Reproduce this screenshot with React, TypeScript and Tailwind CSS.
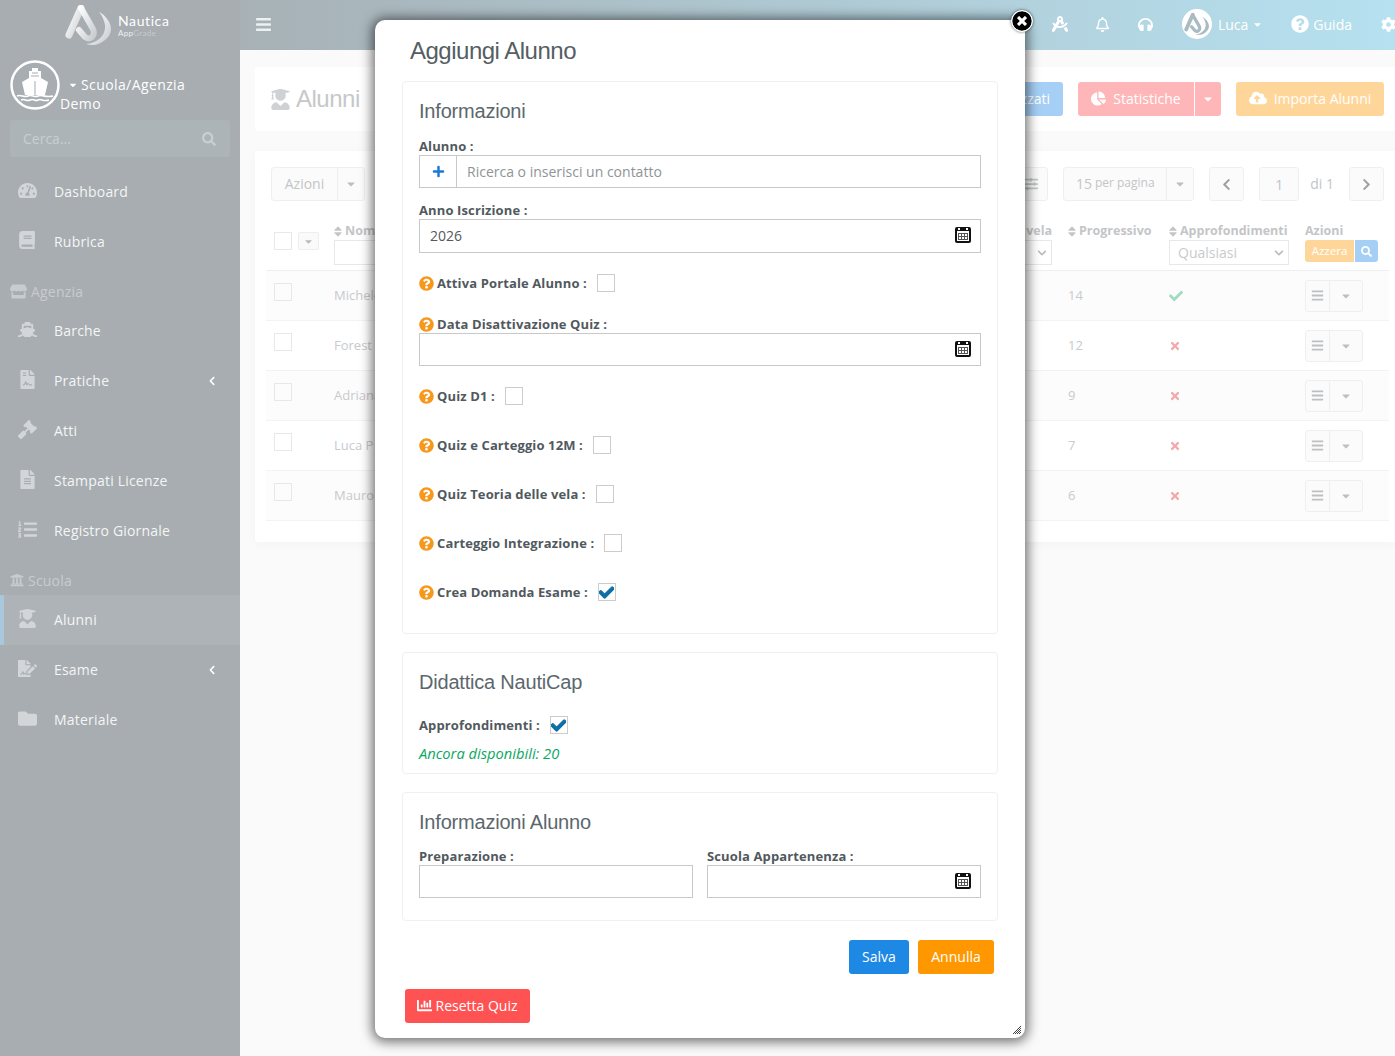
import type { ReactNode } from "react";
import {
  FaBars,
  FaBook,
  FaCaretDown,
  FaChartBar,
  FaChartPie,
  FaCheck,
  FaChevronDown,
  FaChevronLeft,
  FaChevronRight,
  FaCloudUploadAlt,
  FaCog,
  FaDraftingCompass,
  FaFileAlt,
  FaFileContract,
  FaFileSignature,
  FaFolder,
  FaGavel,
  FaHeadphones,
  FaListOl,
  FaPlus,
  FaQuestionCircle,
  FaRegBell,
  FaSearch,
  FaShip,
  FaSlidersH,
  FaSort,
  FaStore,
  FaTachometerAlt,
  FaTimes,
  FaTimesCircle,
  FaUniversity,
  FaUserGraduate,
} from "react-icons/fa";

const rows = [
  { name: "Michele", num: 14, ok: true },
  { name: "Forest", num: 12, ok: false },
  { name: "Adriana", num: 9, ok: false },
  { name: "Luca P", num: 7, ok: false },
  { name: "Mauro", num: 6, ok: false },
];

function Logo({ color = "url(#logoFill)", className }: { color?: string; className?: string }) {
  return (
    <svg viewBox="0 0 48 40" className={className}>
      <defs>
        <linearGradient id="logoFill" x1="0" y1="0" x2="1" y2="1">
          <stop offset="0" stopColor="#ffffff" />
          <stop offset="1" stopColor="#c9cdd0" />
        </linearGradient>
      </defs>
      <path d="M16 3 L4 30" stroke={color} strokeWidth="7" strokeLinecap="round" fill="none" />
      <path d="M16 3 L28 24 C31 31 25 36 20 32 L14 25" stroke={color} strokeWidth="6" strokeLinecap="round" strokeLinejoin="round" fill="none" />
      <path d="M34 7 C44 12 52 26 40 35 C34 40 28 41 21 39 C33 38 41 30 40 20 C39 15 37 10 34 7Z" fill={color} />
    </svg>
  );
}

function ShipAvatar() {
  return (
    <svg viewBox="0 0 50 50" className="h-[50px] w-[50px] shrink-0">
      <circle cx="25" cy="25" r="23.5" fill="none" stroke="#fff" strokeWidth="2.5" />
      <path d="M22 8h6v3h3v7l7 4-3 13H15l-3-13 7-4v-7h3z" fill="#fff" />
      <path d="M22 13h6M21 16h8" stroke="#a7adb1" strokeWidth="1" />
      <path d="M25 21v14" stroke="#a7adb1" strokeWidth="1" />
      <path d="M7 36c4-2 7 2 11 0s6 2 10 0 7 2 15 0M11 40c4-2 5 2 9 0s5 2 8 0 5 2 11 0" stroke="#fff" strokeWidth="1.6" fill="none" />
    </svg>
  );
}

function CalendarIcon() {
  return (
    <svg viewBox="0 0 16 16" className="absolute right-[10px] top-[8px] h-[16px] w-[16px]">
      <rect width="16" height="16" rx="2" fill="#111" />
      <path d="M3 1h2v2H3zM11 1h2v2h-2z" fill="#fff" />
      <rect x="2" y="4" width="12" height="10" fill="#fff" />
      <rect x="3" y="6" width="10" height="7" fill="#555" />
      <path d="M4 7h2v2H4zM7 7h2v2H7zM10 7h2v2h-2zM4 10h2v2H4zM7 10h2v2H7zM10 10h2v2h-2z" fill="#fff" />
    </svg>
  );
}

function MenuItem({ icon, label, arrow, active }: { icon: ReactNode; label: string; arrow?: boolean; active?: boolean }) {
  return (
    <div className={`flex h-[50px] items-center pb-[2px] pr-[23px] ${active ? "border-l-4 border-[#a9c8dc] bg-[#aeb3b7] pl-[14px]" : "pl-[18px]"}`}>
      <span className="flex w-[36px] -translate-y-px text-[19px] text-[#d3d6d8]">{icon}</span>
      <span className="flex-1 text-[14px] tracking-[0.2px] text-[#f4f5f5]">{label}</span>
      {arrow && <FaChevronLeft className="mt-[2px] text-[10px] text-white" />}
    </div>
  );
}

function SectionLabel({ icon, label }: { icon: ReactNode; label: string }) {
  return (
    <div className="flex h-[28px] items-center gap-[4px] pb-[2px] pl-[10px] text-[14px] tracking-[0.2px] text-[#c8cccf]">
      {icon}
      {label}
    </div>
  );
}

function Sidebar() {
  return (
    <aside className="flex h-full w-[240px] shrink-0 flex-col bg-[#a7adb1]">
      <div className="flex h-[50px] items-center pl-[65px]">
        <Logo className="h-[40px] w-[48px]" />
        <div className="ml-[5px] flex flex-col leading-none">
          <span className="font-['Lato',sans-serif] text-[14px] tracking-[0.6px] text-white">Nautica</span>
          <span className="mt-[1px] font-['Lato',sans-serif] text-[8px] tracking-[0.3px] text-[#f0f1f2]">
            App<span className="text-[#c6cacd]">Grade</span>
          </span>
        </div>
      </div>
      <div className="relative h-[70px] pl-[10px] pt-[10px]">
        <ShipAvatar />
        <div className="absolute left-[68px] top-[25px] flex items-center gap-[3px] text-[14px] font-medium leading-[20px] tracking-[0.4px] text-white">
          <FaCaretDown className="text-[10px]" />
          Scuola/Agenzia
        </div>
        <div className="absolute left-[60px] top-[44px] text-[14px] font-medium leading-[20px] tracking-[0.4px] text-white">Demo</div>
      </div>
      <div className="mx-[10px] flex h-[37px] items-center justify-between rounded-[3px] bg-[#adb4b8] pl-[13px] pr-[14px] text-[14px] text-[#c9ced1]">
        Cerca...
        <FaSearch className="text-[14px] text-[#c9ced1]" />
      </div>
      <div className="mt-[10px]">
        <MenuItem icon={<FaTachometerAlt />} label="Dashboard" />
        <MenuItem icon={<FaBook className="text-[18px]" />} label="Rubrica" />
      </div>
      <div className="mt-[11px]">
        <SectionLabel icon={<FaStore className="text-[17px]" />} label="Agenzia" />
      </div>
      <div>
        <MenuItem icon={<FaShip />} label="Barche" />
        <MenuItem icon={<FaFileContract />} label="Pratiche" arrow />
        <MenuItem icon={<FaGavel />} label="Atti" />
        <MenuItem icon={<FaFileAlt />} label="Stampati Licenze" />
        <MenuItem icon={<FaListOl />} label="Registro Giornale" />
      </div>
      <div className="mt-[11px]">
        <SectionLabel icon={<FaUniversity className="text-[14px]" />} label="Scuola" />
      </div>
      <div>
        <MenuItem icon={<FaUserGraduate />} label="Alunni" active />
        <MenuItem icon={<FaFileSignature />} label="Esame" arrow />
        <MenuItem icon={<FaFolder />} label="Materiale" />
      </div>
    </aside>
  );
}

function TopBar() {
  return (
    <header className="flex h-[50px] shrink-0 items-center bg-gradient-to-r from-[#a7b1b6] to-[#b6e1f0] pb-[2px] pl-[15px] text-white">
      <FaBars className="text-[17px] text-[#eef0f1]" />
      <div className="ml-auto flex items-center">
        <FaDraftingCompass className="mr-[27px] text-[16px]" />
        <FaRegBell className="mr-[28px] text-[15px]" />
        <FaHeadphones className="mr-[29px] text-[15px]" />
        <span className="flex h-[30px] w-[30px] items-center justify-center rounded-full bg-white">
          <Logo color="#a9bac3" className="h-[24px] w-[26px]" />
        </span>
        <span className="ml-[6px] text-[14px]">Luca</span>
        <FaCaretDown className="ml-[4px] mr-[28px] text-[11px]" />
        <FaQuestionCircle className="text-[18px]" />
        <span className="ml-[4px] mr-[29px] text-[14px]">Guida</span>
        <FaCog className="mr-[-1px] text-[15px]" />
      </div>
    </header>
  );
}

function SplitBtn({ label, w }: { label: ReactNode; w: string }) {
  return (
    <div className="flex h-[34px] rounded-[3px] border border-[#efefef] bg-[#fbfbfb] text-[#c3c5c7]">
      <span className={`flex items-center justify-center border-r border-[#efefef] pb-[2px] text-[14px] ${w}`}>{label}</span>
      <span className="flex w-[26px] items-center justify-center text-[#bdbfc1]">
        <FaCaretDown className="text-[12px]" />
      </span>
    </div>
  );
}

function SquareBtn({ children, w = "w-[35px]" }: { children: ReactNode; w?: string }) {
  return (
    <span className={`flex h-[34px] items-center justify-center rounded-[3px] border border-[#efefef] bg-[#fbfbfb] text-[14px] text-[#c3c5c7] ${w}`}>
      {children}
    </span>
  );
}

function HeadLabel({ children, sort = true }: { children: ReactNode; sort?: boolean }) {
  return (
    <div className="flex h-[16px] items-center gap-[3px] whitespace-nowrap text-[12.5px] font-bold text-[#c3c5c7]">
      {sort && <FaSort className="w-[8px] text-[13px]" />}
      {children}
    </div>
  );
}

function FakeSelect({ label, w }: { label?: string; w: string }) {
  return (
    <div className={`mt-[1px] flex h-[25px] items-center border border-[#e8e8e8] bg-white pl-[8px] pr-[4px] text-[14px] text-[#c9cbcd] ${w}`}>
      {label}
      <FaChevronDown className="ml-auto text-[10px] text-[#b9bbbd]" />
    </div>
  );
}

function Background() {
  return (
    <main className="flex min-w-0 flex-1 flex-col bg-[#fafafa]">
      <TopBar />
      <div className="flex-1 pl-[15px] pt-[17px]">
        <section className="flex h-[64px] items-center rounded-l-[3px] bg-white pl-[15px] pr-[11px]">
          <FaUserGraduate className="text-[21px] text-[#cfd2d4]" />
          <h1 className="ml-[5px] font-['Liberation_Sans',sans-serif] text-[24px] tracking-[-0.5px] text-[#c5c8ca]">Alunni</h1>
          <div className="ml-auto flex items-center gap-[15px] text-[14px] text-white">
            <span className="flex h-[34px] items-center rounded-[3px] bg-[#a5cff5] px-[13px] pb-[2px]">Utilizzati</span>
            <div className="flex h-[34px] rounded-[3px] bg-[#ffb6b8]">
              <span className="flex w-[117px] items-center justify-center gap-[7px] border-r border-white pb-[2px]">
                <FaChartPie className="text-[15px]" />
                Statistiche
              </span>
              <span className="flex w-[26px] items-center justify-center">
                <FaCaretDown className="text-[12px]" />
              </span>
            </div>
            <span className="flex h-[34px] w-[148px] items-center justify-center gap-[7px] rounded-[3px] bg-[#ffd699] pb-[2px]">
              <FaCloudUploadAlt className="text-[18px]" />
              Importa Alunni
            </span>
          </div>
        </section>
        <section className="mt-[20px] h-[391px] rounded-l-[3px] bg-white pl-[11px] pr-[6px] pt-[16px] shadow-[0_2px_12px_rgba(0,0,0,0.03)]">
          <div className="flex items-center pl-[5px] pr-[5px]">
            <SplitBtn label="Azioni" w="w-[66px]" />
            <div className="ml-auto flex items-center">
              <SquareBtn>
                <FaSlidersH />
              </SquareBtn>
              <div className="ml-[15px]">
                <SplitBtn
                  label={
                    <>
                      15 <span className="ml-[3px] text-[12px]">per pagina</span>
                    </>
                  }
                  w="w-[103px]"
                />
              </div>
              <div className="ml-[15px]">
                <SquareBtn>
                  <FaChevronLeft className="text-[13px] text-[#9ea0a2]" />
                </SquareBtn>
              </div>
              <div className="ml-[15px]">
                <SquareBtn w="w-[40px]">1</SquareBtn>
              </div>
              <span className="ml-[11px] mr-[15px] pb-[1px] text-[14px] text-[#c3c5c7]">di 1</span>
              <SquareBtn>
                <FaChevronRight className="text-[13px] text-[#9ea0a2]" />
              </SquareBtn>
            </div>
          </div>
          <div className="mt-[22px] grid h-[48px] grid-cols-[68px_1fr_68px_101px_136px_84px] border-b border-[#efefef]">
            <div className="flex gap-[6px] pl-[8px] pt-[9px]">
              <span className="h-[18px] w-[18px] border border-[#e8e8e8]" />
              <span className="flex h-[18px] w-[21px] items-center justify-center rounded-[2px] border border-[#eeeeee] bg-[#fafafa]">
                <FaCaretDown className="text-[11px] text-[#b9bbbd]" />
              </span>
            </div>
            <div>
              <HeadLabel>Nome</HeadLabel>
              <div className="mt-[1px] h-[25px] w-[120px] border border-[#e8e8e8]" />
            </div>
            <div className="flex flex-col items-end pr-[16px]">
              <HeadLabel sort={false}>Esame vela</HeadLabel>
              <FakeSelect w="w-[60px]" />
            </div>
            <HeadLabel>Progressivo</HeadLabel>
            <div>
              <HeadLabel>Approfondimenti</HeadLabel>
              <FakeSelect label="Qualsiasi" w="w-[120px]" />
            </div>
            <div>
              <HeadLabel sort={false}>Azioni</HeadLabel>
              <div className="mt-[1px] flex h-[22px] text-[11.5px] text-white">
                <span className="flex w-[49px] items-center justify-center rounded-l-[3px] bg-[#ffd699]">Azzera</span>
                <span className="ml-px flex w-[23px] items-center justify-center rounded-r-[3px] bg-[#a5cff5]">
                  <FaSearch className="text-[11px]" />
                </span>
              </div>
            </div>
          </div>
          {rows.map((row, i) => (
            <div
              key={row.name}
              className={`grid h-[50px] grid-cols-[68px_1fr_68px_101px_136px_84px] items-center border-b border-[#f3f3f3] text-[13px] text-[#c8cacc] ${i % 2 === 0 ? "bg-[#fcfcfc]" : "bg-white"}`}
            >
              <span className="ml-[8px] -mt-[8px] h-[18px] w-[18px] border border-[#e8e8e8]" />
              <span className="mt-[1px]">{row.name}</span>
              <span />
              <span className="mt-[1px]">{row.num}</span>
              <span className="mt-[1px]">
                {row.ok ? <FaCheck className="text-[14px] text-[#a2dcc0]" /> : <FaTimes className="text-[12px] text-[#f3a9a9]" />}
              </span>
              <div className="flex h-[32px] w-[58px] rounded-[3px] border border-[#efefef] bg-[#fbfbfb]">
                <span className="flex w-[24px] items-center justify-center border-r border-[#efefef] text-[#bdbfc1]">
                  <FaBars className="text-[13px]" />
                </span>
                <span className="flex flex-1 items-center justify-center text-[#bdbfc1]">
                  <FaCaretDown className="text-[12px]" />
                </span>
              </div>
            </div>
          ))}
        </section>
      </div>
    </main>
  );
}

function Check({ checked }: { checked?: boolean }) {
  return (
    <span className="flex h-[18px] w-[18px] items-center justify-center border border-[#cccccc] bg-white">
      {checked && <FaCheck className="stroke-[40] text-[15px] text-[#0d6fa5]" />}
    </span>
  );
}

function Label({ children, help }: { children: ReactNode; help?: boolean }) {
  return (
    <span className="flex h-[16px] items-center text-[13px] font-bold leading-[16px] tracking-[0.12px] text-[#51595e]">
      {help && <FaQuestionCircle className="mr-[3px] text-[15px] text-[#f7981d]" />}
      {children}
    </span>
  );
}

function CheckRow({ label, mt, checked, help = true }: { label: string; mt: string; checked?: boolean; help?: boolean }) {
  return (
    <div className={`flex h-[18px] items-center gap-[10px] ${mt}`}>
      <Label help={help}>{label}</Label>
      <Check checked={checked} />
    </div>
  );
}

function Field({ value, calendar }: { value?: string; calendar?: boolean }) {
  return (
    <div className="relative">
      <input
        readOnly
        defaultValue={value}
        className="block h-[33px] w-full border border-[#c9c9c9] bg-white px-[10px] pb-[2px] text-[14px] text-[#55595c] outline-none"
      />
      {calendar && <CalendarIcon />}
    </div>
  );
}

function Panel({ title, pb, children }: { title: string; pb: string; children: ReactNode }) {
  return (
    <section className={`rounded-[4px] border border-[#f0f0f0] px-[16px] pt-[16px] ${pb}`}>
      <h3 className="font-['Liberation_Sans',sans-serif] text-[20px] leading-[26px] tracking-[-0.2px] text-[#5b676d]">{title}</h3>
      {children}
    </section>
  );
}

function Modal() {
  return (
    <div className="absolute left-[375px] top-[20px] h-[1018px] w-[650px] rounded-[10px] bg-white px-[27px] pt-[16px] shadow-[0_1px_12px_3px_rgba(0,0,0,0.55)]">
      <FaTimesCircle className="absolute -right-[8px] -top-[10px] box-content rounded-full border border-white bg-white text-[20px] text-black shadow-[0_0_3px_rgba(0,0,0,0.6)]" />
      <h2 className="pl-[8px] font-['Liberation_Sans',sans-serif] text-[24px] leading-[30px] tracking-[-0.5px] text-[#555e63]">Aggiungi Alunno</h2>
      <div className="mt-[15px] flex flex-col gap-[18px]">
        <Panel title="Informazioni" pb="pb-[32px]">
          <div className="mb-[1px] mt-[14px]">
            <Label>Alunno :</Label>
          </div>
          <div className="flex h-[33px] border border-[#c9c9c9]">
            <span className="flex w-[37px] items-center justify-center border-r border-[#c9c9c9]">
              <FaPlus className="text-[13px] text-[#1a78d6]" />
            </span>
            <input
              readOnly
              placeholder="Ricerca o inserisci un contatto"
              className="flex-1 bg-white px-[10px] text-[14px] outline-none placeholder:text-[#8e9497]"
            />
          </div>
          <div className="mb-[1px] mt-[14px]">
            <Label>Anno Iscrizione :</Label>
          </div>
          <div className="[&_input]:h-[34px]">
            <Field value="2026" calendar />
          </div>
          <CheckRow label="Attiva Portale Alunno :" mt="mt-[21px]" />
          <div className="mb-[1px] mt-[24px]">
            <Label help>Data Disattivazione Quiz :</Label>
          </div>
          <Field calendar />
          <CheckRow label="Quiz D1 :" mt="mt-[21px]" />
          <CheckRow label="Quiz e Carteggio 12M :" mt="mt-[31px]" />
          <CheckRow label="Quiz Teoria delle vela :" mt="mt-[31px]" />
          <CheckRow label="Carteggio Integrazione :" mt="mt-[31px]" />
          <CheckRow label="Crea Domanda Esame :" mt="mt-[31px]" checked />
        </Panel>
        <Panel title="Didattica NautiCap" pb="pb-[11px]">
          <CheckRow label="Approfondimenti :" mt="mt-[21px]" checked help={false} />
          <p className="mt-[10px] text-[14.7px] italic leading-[18px] text-[#0aa85f]">Ancora disponibili: 20</p>
        </Panel>
        <Panel title="Informazioni Alunno" pb="pb-[22px]">
          <div className="mt-[13px] grid grid-cols-2 gap-x-[14px]">
            <div>
              <div className="mb-[1px]">
                <Label>Preparazione :</Label>
              </div>
              <Field />
            </div>
            <div>
              <div className="mb-[1px]">
                <Label>Scuola Appartenenza :</Label>
              </div>
              <Field calendar />
            </div>
          </div>
        </Panel>
      </div>
      <div className="mr-[4px] mt-[19px] flex justify-end gap-[9px] text-[14px] text-white">
        <button className="h-[34px] w-[60px] rounded-[3px] bg-[#1e88e5] pb-[2px]">Salva</button>
        <button className="h-[34px] w-[76px] rounded-[3px] bg-[#ff9800] pb-[2px]">Annulla</button>
      </div>
      <button className="ml-[3px] mt-[15px] flex h-[34px] w-[125px] items-center justify-center gap-[3px] rounded-[3px] bg-[#ff5252] pb-[2px] text-[14px] text-white">
        <FaChartBar className="text-[15px]" />
        Resetta Quiz
      </button>
      <svg viewBox="0 0 9 9" className="absolute bottom-[4px] right-[4px] h-[9px] w-[9px]">
        <path d="M9 1 1 9M9 3 3 9M9 5 5 9M9 7 7 9" stroke="#444" strokeWidth="1" />
      </svg>
    </div>
  );
}

export default function App() {
  return (
    <div className="relative flex h-[1056px] w-full overflow-hidden bg-[#fafafa] font-['Open_Sans',sans-serif]">
      <Sidebar />
      <Background />
      <Modal />
    </div>
  );
}
